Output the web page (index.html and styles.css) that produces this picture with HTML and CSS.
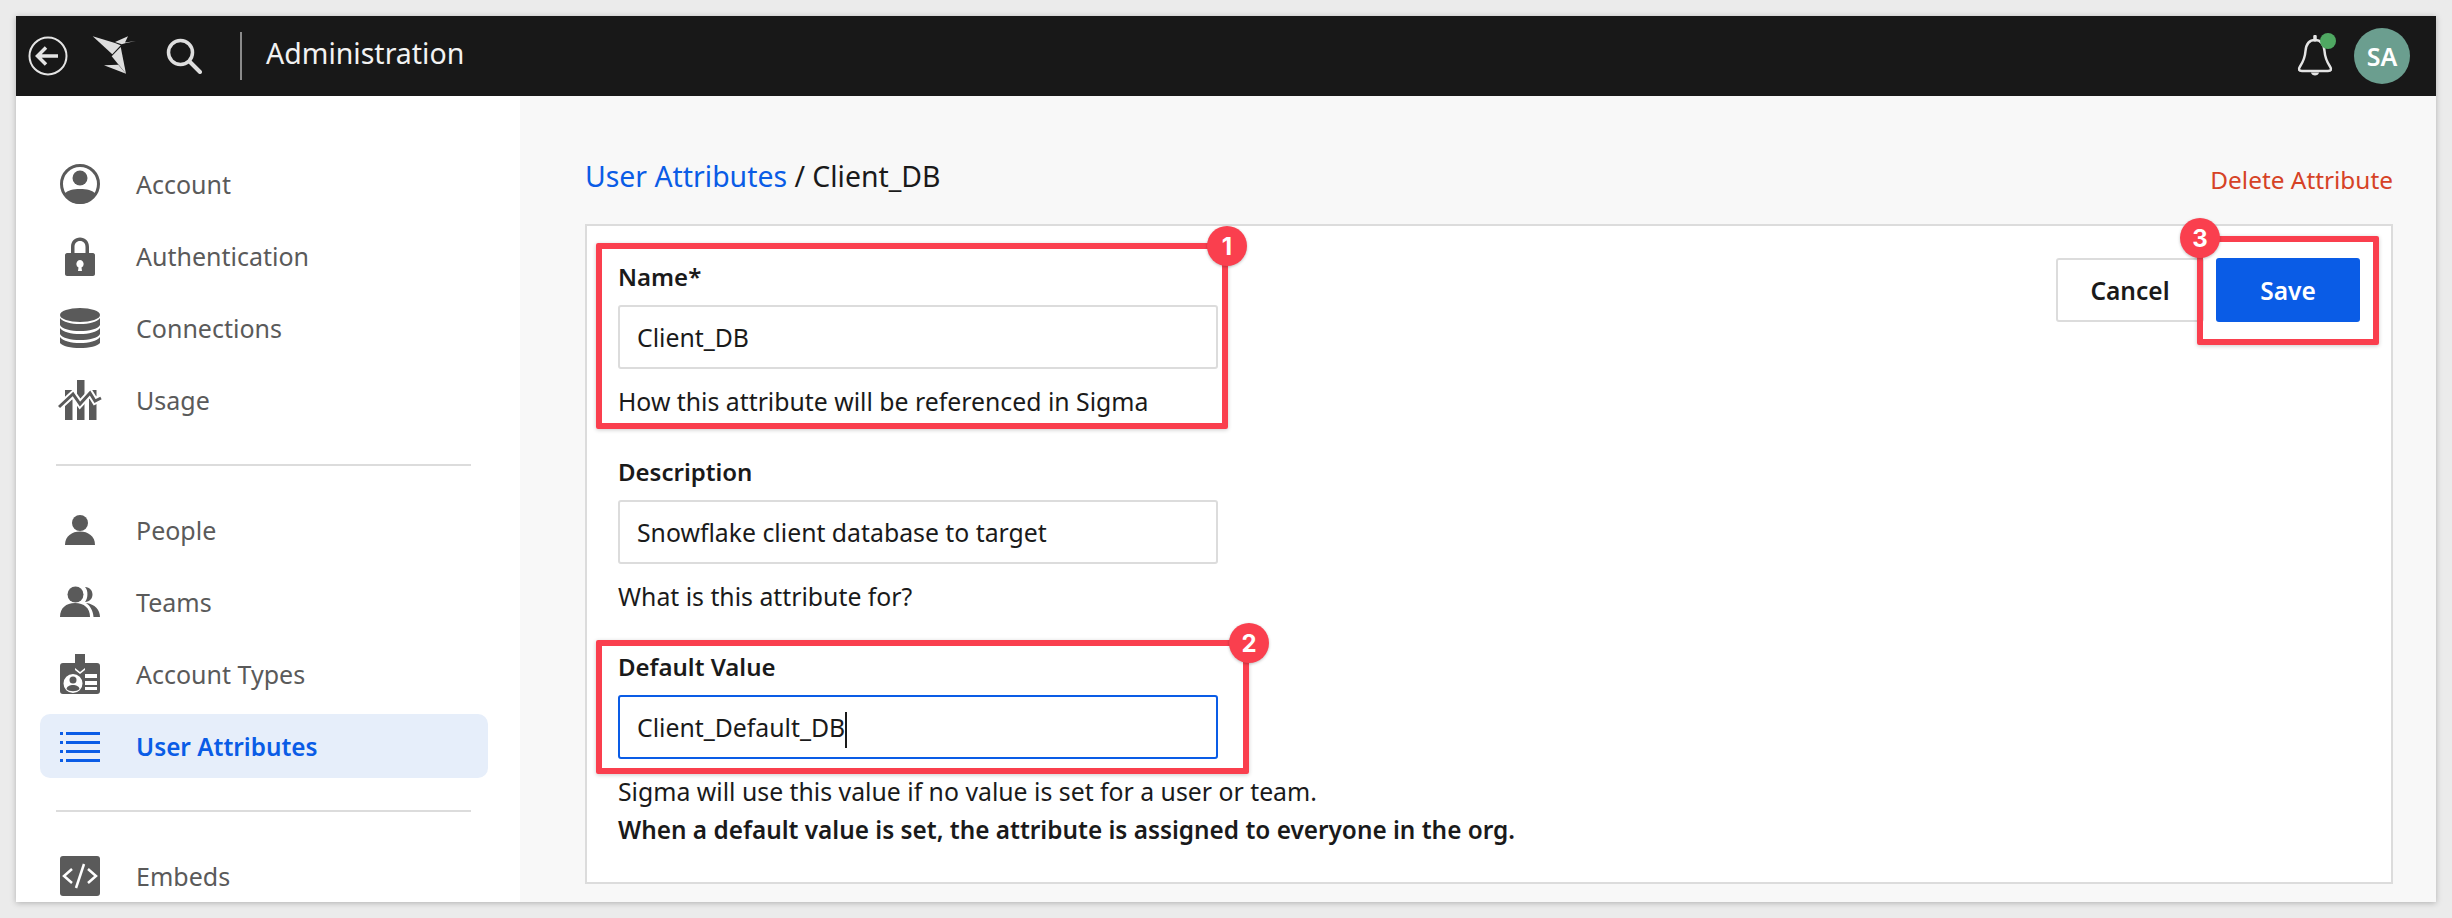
FILE: index.html
```html
<!DOCTYPE html>
<html lang="en">
<head>
    <meta charset="UTF-8" />
    <title>Administration</title>
    <link rel="stylesheet" href="styles.css">
</head>
<body>
    <div class="window">
        <header class="topbar">
            <svg class="ic-back" viewBox="0 0 40 40" fill="none" stroke="#e4e4e4">
                <circle cx="20" cy="20" r="18.500" stroke-width="2" />
                <path d="M30 20H10M18 11.500 9.500 20l8.500 8.500" stroke-width="3.500" />
            </svg>
            <svg class="ic-logo" viewBox="0 0 46 40" fill="#dedede">
                <path d="M0.700 0.300 23 7 28.700 9.300 20.300 18.300Z" />
                <path d="M23 6 36 0.300 33 6.500 44 5 34 7 29.700 8.300Z" />
                <path d="M28.700 11 34 37.700 19.700 20.300Z" />
                <path d="M12 29.300 26.300 28.700 34 37.700Z" />
            </svg>
            <svg class="ic-search" viewBox="0 0 36 36" fill="none" stroke="#dedede">
                <circle cx="14.500" cy="14.500" r="12" stroke-width="3.500" />
                <path d="M23.500 23.500 34 34" stroke-width="4" stroke-linecap="round" />
            </svg>
            <span class="topbar-sep"></span>
            <span class="topbar-title">Administration</span>
            <span class="topbar-right">
                <span class="bell">
                    <svg class="ic-bell" viewBox="0 0 36 42" fill="none" stroke="#e4e4e4" stroke-width="2.500">
                        <path d="M18 5C11 5 9 10.500 8.500 16 8 23 6 27 3 31.500 1 34.500 2 36 5 36H31C34 36 35 34.500 33 31.500 30 27 28 23 27.500 16 27 10.500 25 5 18 5Z" />
                        <path d="M18 1.500V5" stroke-width="3.500" stroke-linecap="round" />
                        <path d="M14 37.500C14.500 41.500 21.500 41.500 22 37.500Z" fill="#e4e4e4" stroke="none" />
                    </svg>
                    <span class="bell-dot"></span>
                </span>
                <span class="avatar">SA</span>
            </span>
        </header>

        <div class="content">
            <nav class="sidebar">
                <ul class="nav-group">
                    <li class="nav-item">
                        <svg class="nav-icon" viewBox="0 0 40 40">
                            <circle cx="20" cy="20" r="18.500" fill="none" stroke="#5a5a5a" stroke-width="3" />
                            <circle cx="20" cy="14" r="7.500" />
                            <path d="M4 30C8 26 13 25 20 25S32 26 36 30C32 36 26 40 20 40S8 36 4 30Z" />
                        </svg>
                        Account
                    </li>
                    <li class="nav-item">
                        <svg class="nav-icon" viewBox="0 0 40 40">
                            <path d="M11 20V11C11 5 15 1.500 20 1.500S29 5 29 11V20H25.500V11C25.500 7.500 23.500 5 20 5S14.500 7.500 14.500 11V20Z" />
                            <path fill-rule="evenodd" d="M7 17H33C34 17 35 18 35 19V38C35 39 34 40 33 40H7C6 40 5 39 5 38V19C5 18 6 17 7 17ZM20 24A4 4 0 0 0 18.500 31.500L18 35H22L21.500 31.500A4 4 0 0 0 20 24Z" />
                        </svg>
                        Authentication
                    </li>
                    <li class="nav-item">
                        <svg class="nav-icon" viewBox="0 0 40 40">
                            <ellipse cx="20" cy="7" rx="20" ry="7" />
                            <path d="M0 10C3 14 11 16 20 16S37 14 40 10V17C38 21 29 23 20 23S2 21 0 17Z" />
                            <path d="M0 20C3 24 11 26 20 26S37 24 40 20V26C38 30 29 32 20 32S2 30 0 26Z" />
                            <path d="M0 29C3 33 11 35 20 35S37 33 40 29V35C38 38 29 40 20 40S2 38 0 35Z" />
                        </svg>
                        Connections
                    </li>
                    <li class="nav-item">
                        <svg class="nav-icon nav-icon-wide" viewBox="0 0 44 40">
                            <rect x="7" y="10" width="7.500" height="30" />
                            <rect x="19" y="0" width="7.500" height="40" />
                            <rect x="31" y="10" width="7.500" height="30" />
                            <path d="M1 27 15 14 22 24 32 13 37 21 43 18" fill="none" stroke="#fff" stroke-width="7" />
                            <path d="M1 27 15 14 22 24 32 13 37 21 43 18" fill="none" stroke="#5a5a5a" stroke-width="3" />
                        </svg>
                        Usage
                    </li>
                </ul>
                <hr class="nav-sep" />
                <ul class="nav-group">
                    <li class="nav-item">
                        <svg class="nav-icon" viewBox="0 0 40 40">
                            <circle cx="20" cy="13" r="8" />
                            <path d="M5 35C5 26 12 21.500 20 21.500S35 26 35 35Z" />
                        </svg>
                        People
                    </li>
                    <li class="nav-item">
                        <svg class="nav-icon" viewBox="0 0 40 40">
                            <path d="M25 5C30 5 32.500 9 32.500 12.500S30 20 25 20C28 17 28.500 8 25 5Z" />
                            <circle cx="15.500" cy="12.500" r="8" />
                            <path d="M0 35C0 26 6 21 15 21S30 26 30 35Z" />
                            <path d="M26 21C35 22 40 28 40 35H33.500C33 29 30.500 24 26 21Z" />
                        </svg>
                        Teams
                    </li>
                    <li class="nav-item">
                        <svg class="nav-icon" viewBox="0 0 40 40">
                            <path fill-rule="evenodd" d="M3 9H15V16L20 20 25 16V9H37C39 9 40 10 40 12V37C40 39 39 40 37 40H3C1 40 0 39 0 37V12C0 10 1 9 3 9ZM13 20A9.500 9.500 0 1 0 13 39 9.500 9.500 0 0 0 13 20ZM25 20V24H37V20ZM25 27V31H37V27ZM25 33V36H37V33Z" />
                            <path d="M15 0H25V14L20 18 15 14Z" />
                            <circle cx="13" cy="26" r="3.500" />
                            <path d="M6.500 35C7 32 10 31 13 31S19 32 19.500 35C17 38 9 38 6.500 35Z" />
                        </svg>
                        Account Types
                    </li>
                    <li class="nav-item nav-item-active">
                        <svg class="nav-icon" viewBox="0 0 40 40">
                            <path d="M0 6H3V9H0ZM6 6H40V9H6ZM0 15H3V18H0ZM6 15H40V18H6ZM0 24H3V27H0ZM6 24H40V27H6ZM0 33H3V36H0ZM6 33H40V36H6Z" />
                        </svg>
                        User Attributes
                    </li>
                </ul>
                <hr class="nav-sep" />
                <ul class="nav-group">
                    <li class="nav-item">
                        <svg class="nav-icon" viewBox="0 0 40 40">
                            <rect width="40" height="40" rx="3" />
                            <path d="M12 13 4 20 12 27M28 13 36 20 28 27" fill="none" stroke="#fff" stroke-width="2.500" />
                            <path d="M24 8 16 32" fill="none" stroke="#fff" stroke-width="2.500" />
                        </svg>
                        Embeds
                    </li>
                </ul>
            </nav>

            <main class="main">
                <div class="page-head">
                    <div class="breadcrumb"><a class="crumb-link">User Attributes</a> / Client_DB</div>
                    <a class="delete-link">Delete Attribute</a>
                </div>

                <section class="card">
                    <form class="attr-form">
                        <div class="field">
                            <label class="field-label">Name*</label>
                            <div class="input">Client_DB</div>
                            <p class="field-hint">How this attribute will be referenced in Sigma</p>
                        </div>
                        <div class="field">
                            <label class="field-label">Description</label>
                            <div class="input">Snowflake client database to target</div>
                            <p class="field-hint">What is this attribute for?</p>
                        </div>
                        <div class="field">
                            <label class="field-label">Default Value</label>
                            <div class="input input-focus">Client_Default_DB<span class="caret"></span></div>
                            <p class="field-hint">Sigma will use this value if no value is set for a user or team.</p>
                            <p class="field-hint field-hint-bold">When a default value is set, the attribute is assigned to everyone in the org.</p>
                        </div>
                    </form>
                    <div class="actions">
                        <button class="btn" type="button">Cancel</button>
                        <button class="btn btn-primary" type="button">Save</button>
                    </div>

                    <div class="callout callout-name"><span class="badge badge-name">1</span></div>
                    <div class="callout callout-default"><span class="badge badge-default">2</span></div>
                    <div class="callout callout-save"><span class="badge badge-save">3</span></div>
                </section>
            </main>
        </div>
    </div>
</body>
</html>
```

FILE: styles.css
```css
* {
    box-sizing: border-box;
}

html,
body {
    height: 100%;
}

body {
    margin: 0;
    padding: 16px;
    background-color: #ebebeb;
    font-family: "Noto Sans", Arial, sans-serif;
    color: #1a1a1a;
    overflow: hidden;
}

.window {
    display: flex;
    flex-direction: column;
    height: 886px;
    overflow: hidden;
    background-color: #fff;
    box-shadow: 0 1px 6px rgba(0,0,0,0.25);
}

/* top bar */
.topbar {
    display: flex;
    align-items: center;
    flex: none;
    height: 80px;
    padding-left: 12px;
    background-color: #181818;
    color: #fff;
}

.ic-back {
    width: 40px;
    height: 40px;
}

.ic-logo {
    width: 46px;
    height: 40px;
    margin-left: 24px;
}

.ic-search {
    width: 36px;
    height: 36px;
    margin-left: 28px;
}

.topbar-sep {
    width: 2px;
    height: 48px;
    margin-left: 38px;
    background-color: #8a8a8a;
}

.topbar-title {
    margin-left: 24px;
    padding-bottom: 6px;
    font-size: 28.5px;
    color: #f2f2f2;
}

.topbar-right {
    display: flex;
    align-items: center;
    margin-left: auto;
    padding-right: 26px;
}

.bell {
    position: relative;
    display: block;
    width: 36px;
    height: 42px;
}

.ic-bell {
    display: block;
    width: 36px;
    height: 42px;
}

.bell-dot {
    position: absolute;
    top: -2px;
    right: -3px;
    width: 16px;
    height: 16px;
    border-radius: 50%;
    background-color: #4fa862;
}

.avatar {
    display: flex;
    align-items: center;
    justify-content: center;
    width: 56px;
    height: 56px;
    margin-left: 21px;
    border-radius: 50%;
    background-color: #6b9e8f;
    color: #fff;
    font-size: 25px;
    font-weight: 600;
}

/* layout below the bar */
.content {
    display: flex;
    flex: 1;
    min-height: 0;
}

.sidebar {
    flex: none;
    width: 504px;
    padding: 56px 32px 0 24px;
    background-color: #fff;
}

.nav-group {
    margin: 0;
    padding: 0;
    list-style: none;
}

.nav-item {
    display: flex;
    align-items: center;
    height: 64px;
    margin-bottom: 8px;
    padding-left: 20px;
    border-radius: 10px;
    font-size: 25px;
    color: #5a5a5a;
}

.nav-group .nav-item:last-child {
    margin-bottom: 0;
}

.nav-icon {
    flex: none;
    width: 40px;
    height: 40px;
    margin-right: 36px;
    fill: #5a5a5a;
}

.nav-icon-wide {
    width: 44px;
    margin-left: -2px;
    margin-right: 34px;
}

.nav-item-active {
    background-color: #e6eefa;
    color: #0a5ce6;
    font-size: 24.3px;
    font-weight: 600;
}

.nav-item-active .nav-icon {
    fill: #0a5ce6;
}

.nav-sep {
    height: 2px;
    margin: 32px 17px 32px 16px;
    border: none;
    background-color: #dcdcdc;
}

/* main column */
.main {
    flex: 1;
    padding: 0 43px 0 65px;
    background-color: #f8f8f8;
}

.page-head {
    display: flex;
    align-items: center;
    justify-content: space-between;
    height: 128px;
    padding-top: 32px;
}

.breadcrumb {
    font-size: 28.4px;
}

.crumb-link {
    color: #0a5ce6;
}

.delete-link {
    margin-top: 6px;
    font-size: 24.4px;
    color: #d64226;
}

.card {
    position: relative;
    display: flex;
    justify-content: space-between;
    height: 660px;
    padding: 0 31px 0 31px;
    border: 2px solid #dcdcdc;
    background-color: #fff;
}

.field {
    padding-top: 32px;
}

.field + .field {
    padding-top: 35px;
}

.field-label {
    display: block;
    font-size: 24px;
    font-weight: 600;
    line-height: 38px;
}

.input {
    width: 600px;
    height: 64px;
    margin-top: 9px;
    padding-left: 17px;
    border: 2px solid #dcdcdc;
    border-radius: 3px;
    background-color: #fff;
    font-size: 24.8px;
    line-height: 60px;
}

.input-focus {
    border-color: #0a5ce6;
}

.caret {
    display: inline-block;
    width: 1.500px;
    height: 36px;
    vertical-align: middle;
    background-color: #1a1a1a;
}

.field-hint {
    margin: 0;
    padding-top: 16px;
    font-size: 24.8px;
    line-height: 33px;
    white-space: nowrap;
}

.field-hint + .field-hint {
    padding-top: 5px;
}

.field-hint-bold {
    font-size: 24.35px;
    font-weight: 600;
}

.actions {
    display: flex;
    gap: 12px;
    margin-top: 32px;
}

.btn {
    width: 148px;
    height: 64px;
    border: 2px solid #dcdcdc;
    border-radius: 3px;
    background-color: #fff;
    font-family: inherit;
    font-size: 24.5px;
    font-weight: 600;
    color: #1a1a1a;
}

.btn-primary {
    width: 144px;
    border: none;
    background-color: #0a5ce6;
    color: #fff;
}

/* numbered red callouts laid over the form */
.callout {
    position: absolute;
    border: 6px solid #fa3f4e;
    border-radius: 2px;
    box-shadow: 0 1px 4px rgba(0,0,0,0.2);
}

.callout-name {
    top: 17px;
    left: 9px;
    width: 632px;
    height: 186px;
}

.callout-default {
    top: 414px;
    left: 9px;
    width: 653px;
    height: 134px;
}

.callout-save {
    top: 10px;
    left: 1610px;
    width: 182px;
    height: 109px;
}

.badge {
    position: absolute;
    display: flex;
    align-items: center;
    justify-content: center;
    width: 40px;
    height: 40px;
    border-radius: 50%;
    background-color: #fa3f4e;
    box-shadow: 0 1px 3px rgba(0,0,0,0.25);
    color: #fff;
    font-family: Inter, Arial, sans-serif;
    font-size: 24px;
    font-weight: 700;
}

.badge-name {
    top: -23px;
    right: -25px;
}

.badge-default {
    top: -23px;
    right: -26px;
}

.badge-save {
    top: -24px;
    left: -23px;
}
```
